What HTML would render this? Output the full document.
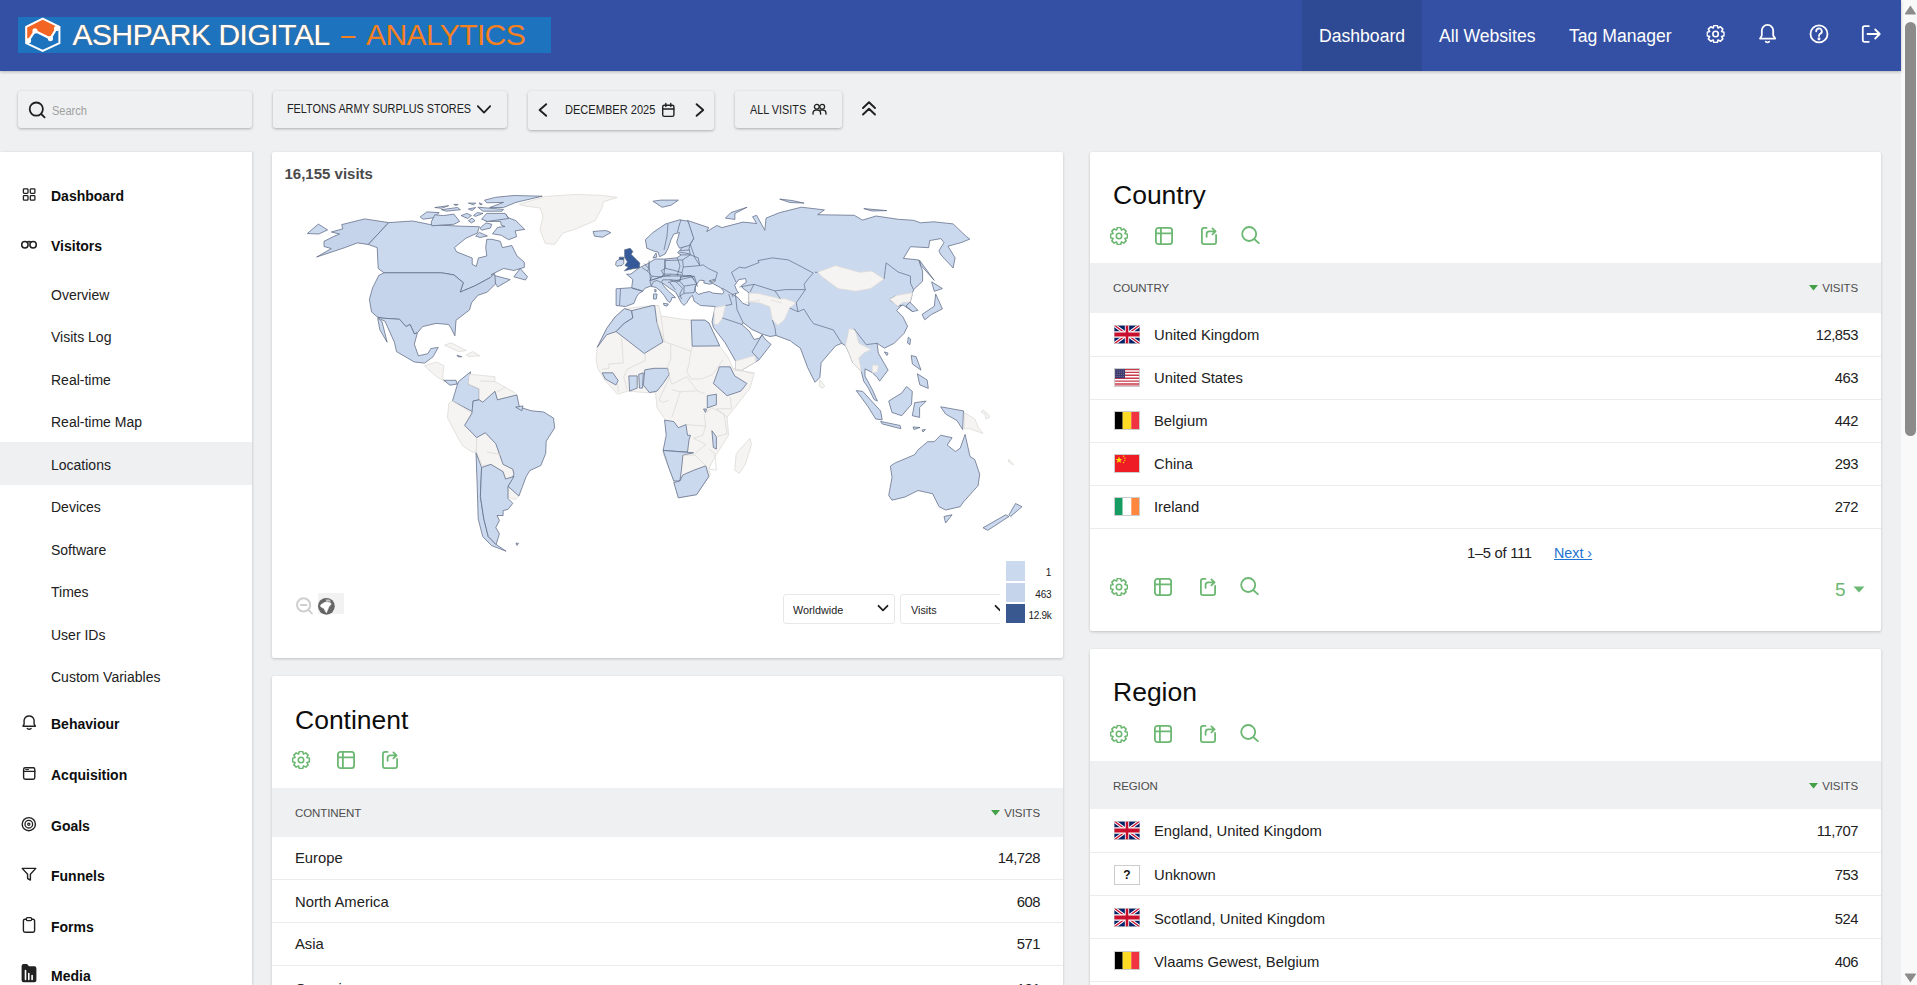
<!DOCTYPE html>
<html><head><meta charset="utf-8"><title>Locations - Matomo</title>
<style>
html,body{margin:0;padding:0;}
body{width:1917px;height:985px;overflow:hidden;position:relative;background:#eff0f1;font-family:"Liberation Sans",sans-serif;color:#212121;}
.t{position:absolute;line-height:1;white-space:nowrap;}
.abs{position:absolute;}
#hdr{position:absolute;left:0;top:0;width:1901px;height:71px;background:#3450a4;box-shadow:0 1px 3px rgba(0,0,0,.25);z-index:2;}
.nav{color:#fff;font-size:17.6px;top:27.6px;}
.ctl{position:absolute;background:#eff0f1;border-radius:3px;box-shadow:0 1px 3px rgba(0,0,0,.28);}
.ctlt{font-size:12px;color:#212121;}
#side{position:absolute;left:0;top:152px;width:252px;height:833px;background:#fff;box-shadow:1px 0 2px rgba(0,0,0,.12);}
.s1{font-size:14px;font-weight:700;left:51px;color:#0d0d0d;}
.s2{font-size:14px;left:51px;color:#212121;}
.card{position:absolute;background:#fff;border-radius:2px;box-shadow:0 1px 3px rgba(0,0,0,.2);overflow:hidden;}
.ttl{font-size:26.5px;color:#0d0d0d;}
.thd{position:absolute;background:#eff0f1;}
.tht{font-size:11.5px;color:#4d4d4d;letter-spacing:-0.1px;}
.row{position:absolute;height:1px;background:#ececec;}
.cell{font-size:14.8px;color:#212121;}
.num{font-size:14.8px;color:#212121;letter-spacing:-0.5px;}
.ico{position:absolute;}
</style></head><body>
<svg width="0" height="0" style="position:absolute">
<defs>
<symbol id="gear" viewBox="0 0 18 18"><path d="M14.91,6.55 L17.44,7.36 L17.44,10.64 L14.91,11.45 L16.13,13.81 L13.81,16.13 L11.45,14.91 L10.64,17.44 L7.36,17.44 L6.55,14.91 L4.19,16.13 L1.87,13.81 L3.09,11.45 L0.56,10.64 L0.56,7.36 L3.09,6.55 L1.87,4.19 L4.19,1.87 L6.55,3.09 L7.36,0.56 L10.64,0.56 L11.45,3.09 L13.81,1.87 L16.13,4.19 Z" fill="none" stroke="currentColor" stroke-width="1.6" stroke-linejoin="round"/><circle cx="9" cy="9" r="2.7" fill="none" stroke="currentColor" stroke-width="1.6"/></symbol>
<symbol id="tbl" viewBox="0 0 18 18"><rect x="0.9" y="0.9" width="16.2" height="16.2" rx="2.6" fill="none" stroke="currentColor" stroke-width="1.8"/><path d="M0.9 6.4H17.1M5.9 0.9V17.1" stroke="currentColor" stroke-width="1.8"/></symbol>
<symbol id="exp" viewBox="0 0 16 18"><path d="M5.5 0.9H3A2.1 2.1 0 0 0 0.9 3V15A2.1 2.1 0 0 0 3 17.1H13A2.1 2.1 0 0 0 15.1 15V8" fill="none" stroke="currentColor" stroke-width="1.8" stroke-linecap="round"/><path d="M5.6 9.8V7A2.6 2.6 0 0 1 8.2 4.4H14.4M11.4 1.4L14.6 4.4L11.4 7.4" fill="none" stroke="currentColor" stroke-width="1.8" stroke-linecap="round" stroke-linejoin="round"/></symbol>
<symbol id="srch" viewBox="0 0 19 18"><circle cx="8.2" cy="8" r="7" fill="none" stroke="currentColor" stroke-width="1.8"/><path d="M13.2 13L17.8 17.2" stroke="currentColor" stroke-width="1.8" stroke-linecap="round"/></symbol>
</defs></svg>

<!-- HEADER -->
<div id="hdr">
  <div class="abs" style="left:18px;top:17px;width:533px;height:36px;background:#1e73be;"></div>
  <svg class="abs" style="left:0;top:0" width="80" height="71" viewBox="0 0 80 71">
    <clipPath id="hx"><path d="M42.7,18 L60.2,26.4 L60.2,43.5 L42.7,51.6 L25.4,43.5 L25.4,26.4Z"/></clipPath>
    <g clip-path="url(#hx)"><rect x="20" y="15" width="45" height="40" fill="#1e73be"/>
    <path d="M20,15 H65 V28.5 L56.5,28.5 L50.4,38.6 L35,30.9 L28.5,40.7 L20,45Z" fill="#f26522"/></g>
    <path d="M42.7,18.6 L59.4,26.8 L59.4,43.1 L42.7,50.9 L26.2,43.1 L26.2,26.8Z" fill="none" stroke="#fff" stroke-width="2"/>
    <path d="M28.5,40.7 L35,30.9 L50.4,38.6 L56.5,28.5" fill="none" stroke="#fff" stroke-width="2.2"/>
    <circle cx="28.5" cy="40.7" r="2.6" fill="#fff"/><circle cx="35" cy="30.9" r="2.6" fill="#fff"/><circle cx="50.4" cy="38.6" r="2.6" fill="#fff"/><circle cx="56.5" cy="28.5" r="2.6" fill="#fff"/>
  </svg>
  <div class="t" style="left:72.5px;top:20px;font-size:30px;color:#fff;letter-spacing:-0.45px;text-shadow:0 0 1px #f47f20;">ASHPARK DIGITAL</div>
  <div class="t" style="left:341px;top:20px;font-size:30px;color:#f7801e;transform:scaleX(0.85);transform-origin:0 0;">–</div>
  <div class="t" style="left:366px;top:20px;font-size:30px;color:#f7801e;letter-spacing:-0.6px;">ANALYTICS</div>
  <svg class="abs" style="left:1700px;top:20px" width="190" height="30" viewBox="1700 20 190 30" fill="none" stroke="#fff" stroke-width="1.8" stroke-linecap="round" stroke-linejoin="round">
    <use href="#gear" x="1706.5" y="24.9" width="18.2" height="18.2" style="color:#fff"/>
    <path d="M1760,38.6 H1775.2 L1773.2,35.6 V30.6 A5.6,5.6 0 0 0 1761.8,30.6 V35.6 Z"/>
    <path d="M1765.8,41.6 Q1767.5,43.2 1769.2,41.6"/>
    <circle cx="1819" cy="33.9" r="8.5"/>
    <path d="M1816.2,31.3 A2.8,2.8 0 1 1 1820.2,33.8 Q1819,34.5 1819,36"/>
    <circle cx="1819" cy="38.7" r="0.6" fill="#fff"/>
    <path d="M1868.8,26.2 H1864.6 A1.8,1.8 0 0 0 1862.8,28 V40 A1.8,1.8 0 0 0 1864.6,41.8 H1868.8"/>
    <path d="M1867.5,34 H1879.5 M1875.2,29.5 L1879.7,34 L1875.2,38.5"/>
  </svg>
  <div class="abs" style="left:1302px;top:0;width:120px;height:71px;background:#2f4a94;"></div>
  <div class="t nav" style="left:1319px;">Dashboard</div>
  <div class="t nav" style="left:1439px;">All Websites</div>
  <div class="t nav" style="left:1569px;">Tag Manager</div>
</div>

<!-- SCROLLBAR -->
<div class="abs" style="left:1901px;top:0;width:16px;height:985px;background:#f9f9f9;"></div>
<div class="abs" style="left:1905px;top:22px;width:11px;height:414px;border-radius:6px;background:#8b8b8b;"></div>
<svg class="abs" style="left:1901px;top:0" width="16" height="985" viewBox="1901 0 16 985"><path d="M1910.4,5.6 L1915.8,13.6 Q1916.2,14.4 1915.3,14.4 H1905.5 Q1904.6,14.4 1905,13.6 Z" fill="#8b8b8b"/><path d="M1910.4,982.4 L1915.8,974.4 Q1916.2,973.6 1915.3,973.6 H1905.5 Q1904.6,973.6 1905,974.4 Z" fill="#8b8b8b"/></svg>

<!-- CONTROLS -->
<div class="ctl" style="left:18px;top:91px;width:234px;height:37px;"></div>
<svg class="abs" style="left:28px;top:101px" width="19" height="18" viewBox="0 0 19 18" fill="none" stroke="#212121" stroke-width="1.8" stroke-linecap="round"><circle cx="8.3" cy="8.1" r="6.6"/><path d="M13.2 13L16.6 16.4"/></svg>
<div class="t" style="left:51.5px;top:104.5px;font-size:12.5px;color:#a0a0a0;transform:scaleX(0.88);transform-origin:0 0;">Search</div>
<div class="ctl" style="left:273px;top:91px;width:234px;height:37px;"></div>
<div class="t ctlt" style="left:287.4px;top:103px;font-size:12.5px;transform:scaleX(0.867);transform-origin:0 0;">FELTONS ARMY SURPLUS STORES</div>
<svg class="abs" style="left:476px;top:104px" width="16" height="11" viewBox="0 0 16 11" fill="none" stroke="#212121" stroke-width="1.8" stroke-linecap="round" stroke-linejoin="round"><path d="M1.8 2.2L8 8.6L14.2 2.2"/></svg>
<div class="ctl" style="left:528px;top:91px;width:186px;height:39px;"></div>
<svg class="abs" style="left:536px;top:102px" width="14" height="16" viewBox="0 0 14 16" fill="none" stroke="#212121" stroke-width="1.9" stroke-linecap="round" stroke-linejoin="round"><path d="M10.2 2.2L3.6 8L10.2 13.8"/></svg>
<div class="t ctlt" style="left:565px;top:104.3px;font-size:12.5px;transform:scaleX(0.885);transform-origin:0 0;">DECEMBER 2025</div>
<svg class="abs" style="left:661px;top:102px" width="15" height="16" viewBox="0 0 15 16" fill="none" stroke="#212121" stroke-width="1.4" stroke-linecap="round"><rect x="1.7" y="3.2" width="11.2" height="11.2" rx="1.6"/><path d="M1.7 7H12.9M4.8 1.5V4.5M9.8 1.5V4.5"/></svg>
<svg class="abs" style="left:693px;top:102px" width="14" height="16" viewBox="0 0 14 16" fill="none" stroke="#212121" stroke-width="1.9" stroke-linecap="round" stroke-linejoin="round"><path d="M3.6 2.2L10.2 8L3.6 13.8"/></svg>
<div class="ctl" style="left:735px;top:91px;width:107px;height:37px;"></div>
<div class="t ctlt" style="left:750px;top:103.5px;font-size:12.5px;transform:scaleX(0.865);transform-origin:0 0;">ALL VISITS</div>
<svg class="abs" style="left:812px;top:103px" width="15" height="13" viewBox="0 0 15 13" fill="none" stroke="#212121" stroke-width="1.3" stroke-linecap="round"><circle cx="4.8" cy="3.8" r="2.4"/><circle cx="10.2" cy="3.8" r="2.4"/><path d="M1 11.2V10A3 3 0 0 1 4 7.2H5.6A3 3 0 0 1 8.6 10V11.2M7.5 7.2H11A3 3 0 0 1 14 10V11.2"/></svg>
<svg class="abs" style="left:860px;top:99px" width="18" height="18" viewBox="0 0 18 18" fill="none" stroke="#212121" stroke-width="1.9" stroke-linecap="round" stroke-linejoin="round"><path d="M3 9L9 3.2L15 9M3 15.5L9 9.7L15 15.5"/></svg>

<!-- SIDEBAR -->
<div id="side">
  <div class="abs" style="left:0;top:290px;width:252px;height:43px;background:#eff0f1;"></div>
</div>
<div class="t s1" style="top:188.7px;">Dashboard</div>
<div class="t s1" style="top:239.2px;">Visitors</div>
<div class="t s2" style="top:287.5px;">Overview</div>
<div class="t s2" style="top:330px;">Visits Log</div>
<div class="t s2" style="top:372.5px;">Real-time</div>
<div class="t s2" style="top:415px;">Real-time Map</div>
<div class="t s2" style="top:457.5px;">Locations</div>
<div class="t s2" style="top:500px;">Devices</div>
<div class="t s2" style="top:542.5px;">Software</div>
<div class="t s2" style="top:585px;">Times</div>
<div class="t s2" style="top:627.5px;">User IDs</div>
<div class="t s2" style="top:670px;">Custom Variables</div>
<div class="t s1" style="top:717px;">Behaviour</div>
<div class="t s1" style="top:768.3px;">Acquisition</div>
<div class="t s1" style="top:819px;">Goals</div>
<div class="t s1" style="top:869px;">Funnels</div>
<div class="t s1" style="top:919.6px;">Forms</div>
<div class="t s1" style="top:969.4px;">Media</div>

<svg class="abs" style="left:16px;top:180px" width="26" height="810" viewBox="16 180 26 810" fill="none" stroke="#212121" stroke-width="1.3" stroke-linecap="round" stroke-linejoin="round">
  <rect x="23.4" y="188.8" width="4.6" height="4.6" rx="0.8"/><rect x="30.3" y="188.8" width="4.6" height="4.6" rx="0.8"/>
  <rect x="23.4" y="195.6" width="4.6" height="4.6" rx="0.8"/><rect x="30.3" y="195.6" width="4.6" height="4.6" rx="0.8"/>
  <circle cx="24.9" cy="244.7" r="3.2" stroke-width="1.5"/><circle cx="33.1" cy="244.7" r="3.2" stroke-width="1.5"/><path d="M27.2,242.4 Q29,240.6 30.8,242.4" stroke-width="1.5"/>
  <path d="M23,726.2 H35.4 L34.1,724.2 V720.2 A5.1,5.3 0 0 0 24.1,720.2 V724.2 Z" stroke-width="1.4"/><path d="M27.3,728.5 Q29.2,730 31.1,728.5" stroke-width="1.4"/>
  <rect x="23.6" y="767.8" width="11.2" height="11.4" rx="1.6" stroke-width="1.4"/><path d="M23.6,771.4 H34.8" stroke-width="1.4"/><path d="M25.6,769.6 H28.6" stroke-width="1" />
  <circle cx="28.8" cy="824.2" r="6.6" stroke-width="1.4"/><circle cx="28.8" cy="824.2" r="3.8" stroke-width="1.3"/><circle cx="28.8" cy="824.2" r="1.1" stroke-width="1.2"/>
  <path d="M22.2,868.4 H35.8 L30.4,874.3 V880 L27.6,878.6 V874.3 Z" stroke-width="1.4"/>
  <path d="M26.2,919.2 H25 A1.6,1.6 0 0 0 23.4,920.8 V930.6 A1.6,1.6 0 0 0 25,932.2 H33 A1.6,1.6 0 0 0 34.6,930.6 V920.8 A1.6,1.6 0 0 0 33,919.2 H31.8" stroke-width="1.4"/><rect x="26.4" y="917.6" width="5.2" height="3" rx="1" stroke-width="1.3"/>
  <path d="M21.6,966 A2,2 0 0 1 23.6,964 H27 L29,966.2 H34.4 A2,2 0 0 1 36.4,968.2 V980.3 A2,2 0 0 1 34.4,982.3 H23.6 A2,2 0 0 1 21.6,980.3 Z" fill="#212121" stroke="none"/>
  <path d="M25.5,979.5 V970.5 M28.8,979.5 V973.5 M32.1,979.5 V975.5" stroke="#fff" stroke-width="1.6"/>
</svg>
<!-- MAP CARD -->
<div class="card" style="left:272px;top:152px;width:791px;height:506px;">
  <div class="t" style="left:12.5px;top:14.3px;font-size:15px;font-weight:700;color:#4a4a4a;">16,155 visits</div>
  <svg class="ico" style="left:22px;top:444px" width="24" height="24" viewBox="0 0 24 24" fill="none" stroke="#cfcfcf" stroke-width="2" stroke-linecap="round"><circle cx="9.6" cy="8.9" r="6.6"/><path d="M6.8 8.9H12.4M14.4 13.8L17.8 17.4"/></svg>
  <div class="ico" style="left:46px;top:441px;width:26px;height:21px;background:#f2f2f2;"></div>
  <svg class="ico" style="left:45px;top:445px" width="18" height="18" viewBox="0 0 18 18"><circle cx="9.4" cy="9.3" r="8.4" fill="#666"/><path d="M8.6,2.6 L12.4,2.4 L14.2,4.6 L9.4,4.4Z" fill="#c8c8c8"/><path d="M3.4,9.1 L4.8,10.5 L6.8,11.2 L8,13.4 L9.4,15.8 L10.4,13.4 L11.4,11 L12.1,9.3 L13.7,7.9 L14,6.4 L12.6,5.6 L10.1,5 L8,5.3 L5.8,6.4 L3.9,7.8Z" fill="#fff" stroke="#fff" stroke-width="0.6" stroke-linejoin="round"/></svg>
  <div class="ico" style="left:510.5px;top:442.4px;width:110px;height:28px;border:1px solid #e8e8e8;border-radius:3px;background:#fff;"></div>
  <div class="t" style="left:520.7px;top:452px;font-size:11.6px;color:#212121;transform:scaleX(0.93);transform-origin:0 0;">Worldwide</div>
  <svg class="ico" style="left:605px;top:452px" width="12" height="9" viewBox="0 0 12 9" fill="none" stroke="#212121" stroke-width="1.8" stroke-linecap="round" stroke-linejoin="round"><path d="M1.5 1.8L6 6.4L10.5 1.8"/></svg>
  <div class="ico" style="left:628.4px;top:442.4px;width:110px;height:28px;border:1px solid #e8e8e8;border-radius:3px;background:#fff;"></div>
  <div class="t" style="left:639px;top:452px;font-size:11.6px;color:#212121;transform:scaleX(0.93);transform-origin:0 0;">Visits</div>
  <svg class="ico" style="left:722px;top:452px" width="12" height="9" viewBox="0 0 12 9" fill="none" stroke="#212121" stroke-width="1.8" stroke-linecap="round" stroke-linejoin="round"><path d="M1.5 1.8L6 6.4L10.5 1.8"/></svg>
  <div class="ico" style="left:728.4px;top:405px;width:62px;height:70px;background:#fff;"></div>
  <div class="ico" style="left:734px;top:409px;width:19px;height:20px;background:#cbd9ef;"></div>
  <div class="ico" style="left:734px;top:431px;width:19px;height:19px;background:#c5d4ea;"></div>
  <div class="ico" style="left:734px;top:452px;width:19px;height:19px;background:#38588f;"></div>
  <div class="t" style="right:11.6px;top:416px;font-size:10px;color:#212121;">1</div>
  <div class="t" style="right:11.6px;top:437.6px;font-size:10px;color:#212121;letter-spacing:-0.2px;">463</div>
  <div class="t" style="right:11.6px;top:458.7px;font-size:10px;color:#212121;letter-spacing:-0.3px;">12.9k</div>
  <!--MAP--><svg class="abs" style="left:0;top:0;" width="791" height="506" viewBox="272 152 791 506" stroke-linejoin="round"><path d="M341.7,224.6 L364.7,218.9 L388.7,222.6 L368.3,244.5 L357.4,242.9 L344.9,247.6 L316.7,257.0 L331.3,248.6 L324.0,246.5 L324.0,241.3 L334.4,236.1 L339.6,234.0 L331.3,232.0 L342.8,228.8Z" fill="#c5d4ea" stroke="#5f6b84" stroke-width="0.75"/><path d="M307.3,233.5 L318.3,224.1 L327.6,229.9 L318.8,234.0Z" fill="#cbd9ef" stroke="#5f6b84" stroke-width="0.75"/><path d="M388.7,222.6 L412.7,221.0 L430.4,224.6 L460.7,226.2 L479.4,226.7 L477.4,233.0 L465.9,238.2 L454.4,247.6 L456.5,251.8 L472.2,258.0 L472.2,264.3 L476.3,266.4 L478.4,258.0 L486.8,256.0 L485.7,247.6 L486.8,239.3 L492.0,239.3 L500.3,241.3 L502.4,247.6 L511.8,245.5 L517.0,256.0 L524.3,262.2 L524.3,267.4 L513.9,270.5 L503.5,268.5 L491.0,274.7 L510.2,279.6 L497.7,286.9 L495.6,283.8 L490.4,277.5 L474.8,285.9 L460.2,292.1 L463.3,282.7 L453.9,274.9 L441.4,272.8 L384.0,272.8 L378.2,268.5 L377.2,247.6 L368.3,244.5Z" fill="#cbd9ef" stroke="#5f6b84" stroke-width="0.75"/><path d="M486.0,221.4 L500.6,221.4 L501.3,225.1 L505.0,226.5 L497.7,227.3 L492.5,233.8 L501.3,235.3 L508.6,239.7 L516.6,236.7 L515.2,230.9 L524.7,229.4 L515.9,220.7 L508.6,217.8 L505.7,214.1 L497.7,216.3 L486.7,220.7Z" fill="#cbd9ef" stroke="#5f6b84" stroke-width="0.75"/><path d="M420.2,217.0 L426.8,211.9 L439.2,212.6 L433.4,217.8 L423.1,219.2Z" fill="#cbd9ef" stroke="#5f6b84" stroke-width="0.75"/><path d="M431.2,222.1 L434.8,214.8 L443.6,215.6 L453.8,214.1 L459.7,221.4 L453.8,224.3 L440.7,225.1 L431.9,225.8Z" fill="#cbd9ef" stroke="#5f6b84" stroke-width="0.75"/><path d="M434.8,207.5 L448.7,205.7 L441.4,208.3Z" fill="#cbd9ef" stroke="#5f6b84" stroke-width="0.75"/><path d="M441.4,209.7 L457.5,207.5 L460.4,209.7 L446.5,211.2Z" fill="#cbd9ef" stroke="#5f6b84" stroke-width="0.75"/><path d="M453.8,204.4 L458.2,204.4 L456.0,205.4Z" fill="#cbd9ef" stroke="#5f6b84" stroke-width="0.75"/><path d="M468.4,203.1 L475.7,203.1 L473.5,204.8Z" fill="#cbd9ef" stroke="#5f6b84" stroke-width="0.75"/><path d="M479.4,202.8 L482.3,204.2 L480.0,204.6Z" fill="#cbd9ef" stroke="#5f6b84" stroke-width="0.75"/><path d="M484.5,200.2 L495.5,197.3 L513.7,195.5 L542.2,196.2 L515.9,202.4 L503.5,207.5 L489.6,207.5 L503.5,202.4 L486.7,202.8Z" fill="#cbd9ef" stroke="#5f6b84" stroke-width="0.75"/><path d="M477.9,207.2 L503.5,209.4 L502.0,211.2 L483.0,211.2Z" fill="#cbd9ef" stroke="#5f6b84" stroke-width="0.75"/><path d="M468.4,209.0 L475.7,207.5 L472.1,210.5Z" fill="#cbd9ef" stroke="#5f6b84" stroke-width="0.75"/><path d="M461.1,215.6 L467.0,213.4 L471.4,215.6 L467.7,218.5Z" fill="#cbd9ef" stroke="#5f6b84" stroke-width="0.75"/><path d="M473.5,215.6 L477.2,212.6 L483.0,213.4 L475.7,216.3Z" fill="#cbd9ef" stroke="#5f6b84" stroke-width="0.75"/><path d="M468.4,220.7 L472.1,218.1 L475.0,220.7 L471.4,222.9Z" fill="#cbd9ef" stroke="#5f6b84" stroke-width="0.75"/><path d="M481.6,219.2 L486.7,213.4 L505.0,213.4 L508.6,218.5 L487.4,221.4Z" fill="#cbd9ef" stroke="#5f6b84" stroke-width="0.75"/><path d="M475.7,236.0 L479.4,232.4 L487.4,236.0 L480.1,237.5Z" fill="#cbd9ef" stroke="#5f6b84" stroke-width="0.75"/><path d="M480.1,228.0 L486.0,222.9 L491.8,224.3 L490.4,228.0 L481.6,230.2Z" fill="#cbd9ef" stroke="#5f6b84" stroke-width="0.75"/><path d="M513.9,276.8 L520.2,268.5 L527.5,276.8 L525.4,280.0Z" fill="#cbd9ef" stroke="#5f6b84" stroke-width="0.75"/><path d="M384.0,272.8 L441.4,272.8 L453.9,274.9 L463.3,282.7 L460.2,292.1 L474.8,285.9 L490.4,277.5 L494.6,273.3 L495.6,283.8 L487.3,292.1 L477.9,295.3 L471.6,302.6 L469.5,309.9 L456.0,320.3 L454.9,335.9 L450.8,327.6 L448.7,324.5 L436.2,323.4 L422.6,326.6 L417.4,332.8 L414.3,333.9 L410.1,324.5 L405.9,326.6 L399.6,319.3 L383.0,318.2 L377.7,317.2 L371.5,311.9 L369.4,299.4 L372.5,288.0 L378.8,275.4Z" fill="#c5d4ea" stroke="#5f6b84" stroke-width="0.75"/><path d="M377.7,317.2 L383.0,318.2 L399.6,319.3 L405.9,326.6 L410.1,324.5 L414.3,333.9 L417.4,332.8 L414.3,344.3 L418.4,355.8 L427.8,353.7 L430.9,348.5 L438.2,347.4 L433.0,356.8 L424.7,363.1 L414.3,362.0 L396.5,351.6 L394.4,342.2 L385.0,321.3 L380.9,319.3Z" fill="#cbd9ef" stroke="#5f6b84" stroke-width="0.75"/><path d="M377.7,318.2 L379.8,329.7 L387.1,342.2 L386.1,338.0 L381.9,321.3Z" fill="#cbd9ef" stroke="#5f6b84" stroke-width="0.75"/><path d="M519.1,204.3 L545.2,196.5 L576.5,194.4 L602.6,195.4 L617.2,197.5 L603.6,201.7 L601.5,209.0 L597.4,216.3 L595.3,220.5 L576.5,228.8 L562.9,233.0 L554.6,244.5 L545.2,243.4 L542.1,235.1 L540.0,229.9 L543.1,216.3 L540.0,208.0 L524.3,205.9Z" fill="#f5f4f2" stroke="#dcdad6" stroke-width="0.75"/><path d="M444.5,345.3 L450.8,342.7 L466.4,350.5 L459.1,351.6Z" fill="#f5f4f2" stroke="#dcdad6" stroke-width="0.75"/><path d="M466.4,354.7 L472.7,351.6 L480.0,355.8 L468.0,356.5Z" fill="#f5f4f2" stroke="#dcdad6" stroke-width="0.75"/><path d="M424.4,365.7 L436.5,362.0 L443.8,365.7 L442.6,377.9 L445.0,381.5 L436.5,376.7 L426.8,368.1Z" fill="#f5f4f2" stroke="#dcdad6" stroke-width="0.75"/><path d="M457.0,355.2 L461.7,356.8 L458.0,356.8Z" fill="#cbd9ef" stroke="#5f6b84" stroke-width="0.75"/><path d="M443.8,380.3 L456.0,380.3 L457.2,384.0 L450.0,385.2Z" fill="#cbd9ef" stroke="#5f6b84" stroke-width="0.75"/><path d="M458.5,381.5 L470.6,371.8 L468.2,384.0 L479.2,388.8 L479.2,399.8 L473.1,401.0 L473.1,412.0 L452.4,401.0 L457.2,385.2Z" fill="#cbd9ef" stroke="#5f6b84" stroke-width="0.75"/><path d="M469.4,374.2 L495.0,376.7 L495.0,381.5 L514.5,392.5 L516.9,395.0 L497.4,399.8 L495.0,391.3 L482.8,402.2 L479.2,399.8 L479.2,388.8 L468.2,384.0Z" fill="#f5f4f2" stroke="#dcdad6" stroke-width="0.75"/><path d="M452.4,401.0 L471.9,413.2 L464.6,425.4 L473.1,433.9 L476.7,437.6 L476.3,452.2 L472.6,452.2 L462.9,446.1 L459.2,440.0 L447.5,418.1 L448.7,403.5Z" fill="#f5f4f2" stroke="#dcdad6" stroke-width="0.75"/><path d="M476.7,437.6 L485.3,432.7 L495.8,443.7 L503.1,464.4 L512.8,469.2 L514.0,476.5 L505.5,479.0 L503.1,471.7 L490.9,464.4 L482.4,465.6 L476.3,452.2Z" fill="#f5f4f2" stroke="#dcdad6" stroke-width="0.75"/><path d="M508.0,486.3 L518.9,496.0 L515.3,499.7 L508.0,497.2Z" fill="#f5f4f2" stroke="#dcdad6" stroke-width="0.75"/><path d="M473.1,401.0 L479.2,399.8 L482.8,402.2 L495.0,391.3 L497.4,399.8 L516.9,395.0 L519.4,407.1 L531.5,410.8 L543.7,412.0 L553.5,418.1 L554.7,427.8 L546.2,441.2 L545.7,453.4 L540.8,465.6 L529.9,470.5 L526.2,476.5 L518.9,496.0 L508.0,486.3 L514.0,474.1 L512.8,469.2 L503.1,464.4 L495.8,443.7 L485.3,432.7 L476.7,437.6 L473.1,433.9 L464.6,425.4 L471.9,413.2Z" fill="#cbd9ef" stroke="#5f6b84" stroke-width="0.75"/><path d="M515.7,407.1 L523.0,405.9 L521.8,410.8Z" fill="#cbd9ef" stroke="#5f6b84" stroke-width="0.75"/><path d="M476.0,452.8 L481.6,467.4 L480.4,496.4 L483.8,518.8 L488.3,536.6 L496.1,544.5 L506.1,551.2 L491.6,545.6 L482.7,536.6 L478.2,518.8 L477.1,483.0Z" fill="#cbd9ef" stroke="#5f6b84" stroke-width="0.75"/><path d="M481.6,467.4 L490.9,464.4 L503.1,471.7 L505.5,479.0 L514.0,476.5 L508.0,486.3 L508.0,498.5 L512.8,503.3 L508.0,509.4 L503.1,510.6 L503.1,515.5 L497.0,515.5 L499.4,520.4 L495.8,527.7 L499.4,533.8 L496.1,544.5 L488.3,536.6 L483.8,518.8 L480.4,496.4Z" fill="#cbd9ef" stroke="#5f6b84" stroke-width="0.75"/><path d="M516.0,543.0 L518.5,543.5 L517.0,545.5Z" fill="#cbd9ef" stroke="#5f6b84" stroke-width="0.75"/><path d="M593.0,231.6 L599.4,230.9 L606.2,230.6 L610.8,232.6 L602.6,237.2 L594.6,236.2Z" fill="#cbd9ef" stroke="#5f6b84" stroke-width="0.75"/><path d="M652.9,201.2 L661.0,200.1 L678.3,200.1 L671.2,205.2 L662.1,207.3 L656.0,203.2Z" fill="#cbd9ef" stroke="#5f6b84" stroke-width="0.75"/><path d="M730.9,212.6 L747.1,207.2 L734.9,213.5 L734.9,219.4 L725.4,218.1Z" fill="#cbd9ef" stroke="#5f6b84" stroke-width="0.75"/><path d="M779.7,199.1 L792.0,200.5 L804.1,203.1 L790.0,202.5Z" fill="#cbd9ef" stroke="#5f6b84" stroke-width="0.75"/><path d="M863.8,208.6 L875.0,209.6 L886.8,210.6 L872.0,211.0Z" fill="#cbd9ef" stroke="#5f6b84" stroke-width="0.75"/><path d="M630.6,274.2 L638.7,268.1 L648.9,263.1 L655.0,259.0 L665.1,259.0 L676.9,257.8 L681.2,254.9 L677.6,252.8 L682.6,247.1 L690.4,244.3 L693.5,238.7 L687.4,220.4 L708.7,227.6 L706.7,231.6 L716.9,225.5 L721.9,227.6 L743.1,222.1 L756.6,223.5 L752.6,216.7 L756.6,215.3 L764.8,230.3 L766.1,218.1 L779.7,212.6 L801.4,207.2 L824.4,209.9 L817.7,214.7 L854.3,215.3 L862.4,220.1 L876.0,216.0 L898.3,219.3 L913.5,220.3 L920.6,222.8 L933.8,221.8 L953.1,223.9 L966.3,236.5 L969.8,239.1 L961.2,242.6 L948.0,246.2 L955.1,257.9 L953.1,268.0 L940.9,254.8 L938.9,250.8 L944.0,242.6 L940.9,238.6 L929.7,240.6 L928.7,247.7 L910.5,246.7 L903.4,258.4 L918.6,259.9 L922.6,271.1 L922.6,281.2 L913.5,289.8 L912.6,292.7 L909.9,303.5 L912.6,311.6 L903.1,305.0 L897.7,306.2 L889.5,299.4 L895.4,295.8 L890.5,300.7 L901.5,305.6 L896.6,310.5 L902.7,316.5 L907.6,326.3 L903.9,333.6 L894.2,343.3 L884.4,348.2 L877.1,343.3 L878.3,353.1 L888.1,370.1 L879.6,381.1 L877.1,377.4 L872.3,372.6 L865.0,368.9 L865.0,376.2 L872.3,389.6 L877.4,401.1 L874.1,399.5 L868.4,388.1 L863.7,381.1 L861.3,371.4 L852.8,362.8 L847.9,350.6 L845.5,345.8 L841.8,343.3 L835.7,345.8 L821.1,362.8 L819.9,377.4 L815.0,382.3 L807.7,367.7 L800.4,348.2 L791.9,342.1 L790.6,340.9 L776.0,335.5 L770.0,336.5 L761.8,334.0 L752.0,329.5 L743.0,322.5 L742.0,324.5 L749.5,331.5 L754.0,339.5 L760.0,338.0 L762.0,334.8 L765.0,339.0 L771.0,344.4 L759.2,359.6 L755.9,361.8 L741.3,370.2 L735.5,370.2 L735.5,361.0 L725.1,342.7 L713.5,327.5 L712.0,322.0 L714.2,311.7 L715.2,307.6 L715.2,306.5 L700.6,305.5 L694.0,301.1 L692.5,295.4 L690.4,296.9 L686.9,302.5 L684.0,305.4 L681.2,302.5 L678.3,296.9 L675.5,291.9 L669.8,288.3 L664.1,284.1 L662.0,282.8 L663.4,285.5 L668.4,291.2 L674.1,296.1 L675.5,297.6 L671.9,297.6 L671.2,300.4 L669.8,302.5 L667.7,301.1 L664.1,295.4 L659.9,290.5 L656.3,287.6 L653.5,286.9 L650.6,286.2 L644.9,288.3 L642.8,291.2 L639.2,293.3 L636.9,296.1 L633.8,303.4 L625.5,306.5 L616.1,305.5 L616.1,288.8 L631.7,287.7 L632.8,279.4 L626.5,274.2Z M695.3,286.2 L698.1,282.2 L699.7,280.2 L704.2,280.6 L703.8,283.0 L709.5,284.2 L712.7,283.4 L720.9,287.9 L724.1,291.9 L722.5,294.0 L712.7,293.1 L709.5,291.5 L703.8,292.7 L698.1,294.4 L695.3,291.1Z M734.7,285.4 L738.7,279.7 L745.6,278.5 L746.4,282.2 L741.6,285.4 L742.8,288.3 L746.8,291.1 L749.0,293.0 L748.9,300.0 L748.9,305.7 L742.8,303.3 L737.9,297.6 L732.6,294.4 L738.7,292.7 L736.7,290.3Z M709.1,281.0 L714.4,279.3 L715.6,281.0 L711.9,282.6Z" fill="#cbd9ef" fill-rule="evenodd" stroke="#5f6b84" stroke-width="0.75"/><path d="M645.4,239.7 L652.9,232.6 L665.3,224.1 L679.5,219.8 L688.0,221.2 L693.7,238.3 L689.4,245.4 L679.5,248.2 L676.6,242.5 L679.5,232.6 L673.8,234.0 L671.0,239.7 L668.1,248.2 L665.1,254.0 L659.6,256.7 L658.0,252.0 L653.9,251.1 L646.8,248.2Z" fill="#cbd9ef" stroke="#5f6b84" stroke-width="0.75"/><path d="M652.9,258.0 L656.0,252.9 L657.0,257.0Z" fill="#cbd9ef" stroke="#5f6b84" stroke-width="0.75"/><path d="M653.5,294.0 L657.0,294.0 L656.3,299.0 L653.5,299.0Z" fill="#cbd9ef" stroke="#5f6b84" stroke-width="0.75"/><path d="M654.6,289.5 L656.2,289.8 L655.9,292.0 L654.8,291.8Z" fill="#cbd9ef" stroke="#5f6b84" stroke-width="0.75"/><path d="M663.4,303.3 L668.4,304.0 L667.0,306.1 L664.1,305.4Z" fill="#cbd9ef" stroke="#5f6b84" stroke-width="0.75"/><path d="M616.2,261.4 L619.3,259.3 L623.8,259.6 L623.8,263.3 L622.0,265.4 L616.8,266.3 L615.6,264.8Z" fill="#cbd9ef" stroke="#5f6b84" stroke-width="0.75"/><path d="M624.6,249.8 L630.2,248.3 L632.8,251.4 L631.2,254.4 L636.2,259.4 L639.8,263.0 L639.3,267.9 L633.2,268.7 L624.4,270.8 L628.3,267.0 L624.9,265.6 L627.4,261.8 L624.7,257.5Z" fill="#355a9a" stroke="#5f6b84" stroke-width="0.7"/><path d="M619.3,257.2 L623.8,257.2 L623.8,259.6 L619.3,259.3Z" fill="#355a9a" stroke="#5f6b84" stroke-width="0.75"/><path d="M597.3,347.2 L606.7,328.4 L615.0,317.0 L624.4,308.6 L652.6,305.5 L658.9,305.5 L661.0,315.9 L680.8,319.0 L691.2,320.1 L704.8,320.1 L709.0,323.0 L719.7,345.9 L728.3,357.6 L733.5,369.8 L754.5,372.8 L750.0,388.1 L734.7,407.9 L727.1,417.0 L728.6,435.3 L714.9,456.6 L708.8,468.8 L710.3,474.9 L696.6,494.7 L678.3,497.8 L673.8,481.0 L669.2,468.8 L663.1,453.6 L667.7,435.3 L664.6,418.5 L657.0,407.9 L655.5,392.6 L644.8,392.6 L628.1,391.1 L617.4,394.2 L605.2,380.5 L597.6,368.3 L596.1,359.1Z" fill="#f5f4f2" stroke="#dcdad6" stroke-width="0.75"/><path d="M624.4,308.6 L631.7,310.7 L632.8,318.0 L624.4,323.2 L616.1,331.6 L606.7,334.7 L597.3,347.2 L606.7,328.4 L615.0,317.0Z" fill="#cbd9ef" stroke="#5f6b84" stroke-width="0.75"/><path d="M631.7,310.7 L652.6,305.5 L654.7,305.5 L656.8,322.2 L663.0,342.0 L644.3,353.5 L616.1,331.6 L624.4,323.2 L632.8,318.0Z" fill="#cbd9ef" stroke="#5f6b84" stroke-width="0.75"/><path d="M691.2,320.1 L704.8,320.1 L709.0,323.0 L719.7,345.9 L692.2,346.2Z" fill="#cbd9ef" stroke="#5f6b84" stroke-width="0.75"/><path d="M602.2,372.8 L612.8,372.8 L618.2,380.5 L615.9,385.0 L605.2,378.9Z" fill="#cbd9ef" stroke="#5f6b84" stroke-width="0.75"/><path d="M628.8,375.9 L637.2,375.9 L637.2,388.1 L629.6,391.1Z" fill="#cbd9ef" stroke="#5f6b84" stroke-width="0.75"/><path d="M638.7,374.4 L643.3,372.8 L642.6,388.1 L639.5,388.1Z" fill="#cbd9ef" stroke="#5f6b84" stroke-width="0.75"/><path d="M644.8,369.8 L654.0,368.3 L667.7,368.3 L669.2,374.4 L663.1,383.5 L657.0,391.1 L649.4,392.6 L643.3,385.0Z" fill="#cbd9ef" stroke="#5f6b84" stroke-width="0.75"/><path d="M719.5,366.8 L730.1,366.8 L734.7,375.9 L746.9,383.5 L740.8,391.1 L727.1,395.7 L713.4,383.5Z" fill="#cbd9ef" stroke="#5f6b84" stroke-width="0.75"/><path d="M707.3,395.7 L716.4,394.2 L716.4,404.8 L707.3,407.9Z" fill="#cbd9ef" stroke="#5f6b84" stroke-width="0.75"/><path d="M703.5,409.0 L706.5,409.0 L705.5,412.5Z" fill="#cbd9ef" stroke="#5f6b84" stroke-width="0.75"/><path d="M711.9,430.7 L716.4,436.8 L716.4,449.0 L713.4,447.5Z" fill="#cbd9ef" stroke="#5f6b84" stroke-width="0.75"/><path d="M664.6,420.1 L673.8,421.6 L678.3,427.7 L686.0,424.6 L687.5,435.3 L690.5,435.3 L689.0,439.9 L687.5,452.1 L663.1,450.5 L666.2,435.3Z" fill="#cbd9ef" stroke="#5f6b84" stroke-width="0.75"/><path d="M663.1,450.5 L693.6,452.8 L682.9,455.1 L681.4,470.3 L679.9,481.0 L673.8,481.0 L669.2,468.8Z" fill="#cbd9ef" stroke="#5f6b84" stroke-width="0.75"/><path d="M679.9,481.0 L682.9,474.9 L693.6,470.3 L705.8,465.8 L708.8,476.4 L696.6,494.7 L678.3,497.8 L673.8,482.5Z" fill="#cbd9ef" stroke="#5f6b84" stroke-width="0.75"/><path d="M749.9,438.3 L751.5,444.4 L745.4,464.2 L739.3,473.4 L734.7,470.3 L736.2,453.6Z" fill="#f5f4f2" stroke="#dcdad6" stroke-width="0.75"/><path d="M817.7,272.3 L835.3,265.5 L859.7,272.3 L871.9,271.0 L884.1,279.1 L870.6,288.6 L855.6,291.3 L838.0,288.6 L821.7,276.4Z" fill="#f5f4f2" stroke="#dcdad6" stroke-width="0.75"/><path d="M749.0,293.0 L759.2,293.6 L780.3,298.8 L785.6,298.8 L796.2,302.8 L789.6,308.0 L784.3,320.0 L777.7,325.2 L772.4,320.0 L769.8,306.8 L759.2,302.8 L749.0,302.0Z" fill="#f5f4f2" stroke="#dcdad6" stroke-width="0.75"/><path d="M715.2,307.6 L725.6,305.5 L722.5,318.0 L718.3,324.3 L714.2,324.3 L714.2,311.7Z" fill="#f5f4f2" stroke="#dcdad6" stroke-width="0.75"/><path d="M735.5,361.0 L754.8,355.5 L755.9,361.8 L741.3,370.2 L735.5,370.2Z" fill="#f5f4f2" stroke="#dcdad6" stroke-width="0.75"/><path d="M845.5,345.8 L849.1,328.7 L855.2,329.9 L858.9,343.3 L871.0,349.4 L863.7,353.1 L858.9,358.0 L861.3,371.4 L852.8,362.8 L847.9,350.6Z" fill="#f5f4f2" stroke="#dcdad6" stroke-width="0.75"/><path d="M872.3,365.0 L878.3,365.3 L877.5,372.0 L872.3,372.6Z" fill="#f5f4f2" stroke="#dcdad6" stroke-width="0.75"/><path d="M889.5,299.4 L896.3,295.4 L912.6,292.7 L909.9,302.2 L903.1,302.2 L897.7,306.2Z" fill="#f5f4f2" stroke="#dcdad6" stroke-width="0.75"/><path d="M819.9,379.9 L824.8,386.0 L822.3,388.4 L819.0,386.0Z" fill="#f5f4f2" stroke="#dcdad6" stroke-width="0.75"/><path d="M909.9,302.2 L918.0,310.3 L912.6,311.6 L906.0,306.0Z" fill="#cbd9ef" stroke="#5f6b84" stroke-width="0.75"/><path d="M935.7,294.0 L942.4,308.9 L931.6,314.4 L924.8,319.8 L922.1,314.4 L934.3,306.2Z" fill="#cbd9ef" stroke="#5f6b84" stroke-width="0.75"/><path d="M931.6,281.8 L942.4,288.6 L934.3,291.3Z" fill="#cbd9ef" stroke="#5f6b84" stroke-width="0.75"/><path d="M919.4,260.1 L934.3,280.4 L921.0,265.5Z" fill="#cbd9ef" stroke="#5f6b84" stroke-width="0.75"/><path d="M908.3,337.2 L910.5,339.0 L910.0,344.6 L907.5,343.0Z" fill="#cbd9ef" stroke="#5f6b84" stroke-width="0.75"/><path d="M884.4,351.9 L888.1,353.1 L886.9,355.5Z" fill="#cbd9ef" stroke="#5f6b84" stroke-width="0.75"/><path d="M911.2,355.5 L916.1,356.7 L921.0,370.1 L912.4,364.0Z" fill="#cbd9ef" stroke="#5f6b84" stroke-width="0.75"/><path d="M917.3,373.8 L927.1,379.9 L928.3,388.4 L919.8,384.8Z" fill="#cbd9ef" stroke="#5f6b84" stroke-width="0.75"/><path d="M856.2,390.6 L862.7,391.4 L880.6,410.9 L882.2,419.8 L875.7,419.0 L867.6,406.0Z" fill="#cbd9ef" stroke="#5f6b84" stroke-width="0.75"/><path d="M880.6,421.4 L900.1,425.5 L900.9,428.7 L882.2,423.9Z" fill="#cbd9ef" stroke="#5f6b84" stroke-width="0.75"/><path d="M888.7,401.1 L901.7,393.0 L906.6,386.5 L912.3,391.4 L911.5,404.4 L901.7,415.7 L892.0,412.5Z" fill="#cbd9ef" stroke="#5f6b84" stroke-width="0.75"/><path d="M914.7,402.7 L926.1,401.1 L919.6,407.6 L919.6,417.4 L912.3,415.7Z" fill="#cbd9ef" stroke="#5f6b84" stroke-width="0.75"/><path d="M940.7,406.8 L963.5,410.9 L962.7,429.6 L957.0,420.6 L945.6,414.1Z" fill="#cbd9ef" stroke="#5f6b84" stroke-width="0.75"/><path d="M964.3,412.5 L974.8,419.0 L978.1,427.1 L983.0,433.6 L970.0,428.7 L964.3,428.7Z" fill="#f5f4f2" stroke="#dcdad6" stroke-width="0.75"/><path d="M913.0,427.0 L920.0,427.5 L914.0,429.5Z" fill="#cbd9ef" stroke="#5f6b84" stroke-width="0.75"/><path d="M922.0,430.0 L925.5,429.5 L923.0,432.0Z" fill="#cbd9ef" stroke="#5f6b84" stroke-width="0.75"/><path d="M890.4,466.1 L895.2,462.9 L914.7,454.7 L918.0,449.9 L927.7,441.7 L934.2,441.7 L940.7,435.2 L952.1,437.7 L947.2,445.0 L955.4,451.5 L960.2,448.2 L965.1,434.4 L970.0,456.4 L974.8,459.6 L979.7,474.2 L978.1,485.6 L963.5,501.9 L960.2,506.7 L945.6,510.0 L939.1,506.7 L932.6,493.7 L918.0,490.5 L905.0,497.0 L892.0,500.2 L888.7,495.4 L892.0,477.5Z" fill="#cbd9ef" stroke="#5f6b84" stroke-width="0.75"/><path d="M944.0,516.5 L952.1,514.8 L945.6,523.0Z" fill="#cbd9ef" stroke="#5f6b84" stroke-width="0.75"/><path d="M983.0,527.8 L1005.7,514.8 L1009.0,516.5 L987.8,530.3Z" fill="#cbd9ef" stroke="#5f6b84" stroke-width="0.75"/><path d="M1009.0,514.8 L1015.5,503.5 L1022.0,506.7 L1010.6,516.5Z" fill="#cbd9ef" stroke="#5f6b84" stroke-width="0.75"/><path d="M983.0,410.0 L987.0,413.0 L990.0,417.0 L986.0,419.0 L985.0,414.0 L981.0,412.0Z" fill="#f5f4f2" stroke="#dcdad6" stroke-width="0.75"/><path d="M1008.5,459.5 L1013.5,464.0 L1012.5,465.0 L1008.0,461.0Z" fill="#f5f4f2" stroke="#dcdad6" stroke-width="0.75"/><path d="M621.7,338.5 L623.3,363.0 L608.9,364.0 L608.9,368.3" fill="none" stroke="#d9d7d3" stroke-width="0.7"/><path d="M645.1,353.4 L645.1,360.8 L635.5,365.1 L627.0,369.4 L623.8,376.8" fill="none" stroke="#d9d7d3" stroke-width="0.7"/><path d="M664.3,341.7 L670.7,343.8 L691.0,351.2 L692.0,347.0" fill="none" stroke="#d9d7d3" stroke-width="0.7"/><path d="M670.7,343.8 L670.7,359.8 L667.5,366.2 L669.6,376.8 L671.8,384.3" fill="none" stroke="#d9d7d3" stroke-width="0.7"/><path d="M691.0,351.2 L688.8,365.1 L686.7,371.5 L691.0,379.0 L701.6,379.0 L712.3,374.7 L723.0,359.8" fill="none" stroke="#d9d7d3" stroke-width="0.7"/><path d="M671.8,384.3 L686.7,376.8 L697.3,390.7 L680.3,391.8 L671.8,389.6" fill="none" stroke="#d9d7d3" stroke-width="0.7"/><path d="M680.3,391.8 L678.2,398.2 L671.8,417.3" fill="none" stroke="#d9d7d3" stroke-width="0.7"/><path d="M697.3,390.7 L704.8,393.9" fill="none" stroke="#d9d7d3" stroke-width="0.7"/><path d="M669.6,376.8 L659.0,400.3 L663.2,402.4 L668.6,400.3" fill="none" stroke="#d9d7d3" stroke-width="0.7"/><path d="M730.4,397.1 L731.5,408.8 L716.5,408.8 L727.2,417.3" fill="none" stroke="#d9d7d3" stroke-width="0.7"/><path d="M733.6,368.3 L752.8,373.6" fill="none" stroke="#d9d7d3" stroke-width="0.7"/><path d="M601.4,369.4 L608.9,368.3" fill="none" stroke="#d9d7d3" stroke-width="0.7"/><path d="M617.4,384.3 L618.5,391.8" fill="none" stroke="#d9d7d3" stroke-width="0.7"/><path d="M623.8,376.8 L627.0,389.6" fill="none" stroke="#d9d7d3" stroke-width="0.7"/><path d="M686.0,424.6 L705.8,426.2 L702.7,435.3 L693.6,438.3" fill="none" stroke="#d9d7d3" stroke-width="0.7"/><path d="M705.8,426.2 L704.2,414.0 L711.9,407.9" fill="none" stroke="#d9d7d3" stroke-width="0.7"/><path d="M711.9,407.9 L724.0,414.0 L727.1,433.8 L716.4,436.8" fill="none" stroke="#d9d7d3" stroke-width="0.7"/><path d="M693.6,438.3 L705.8,444.4 L695.1,453.6" fill="none" stroke="#d9d7d3" stroke-width="0.7"/><path d="M708.8,449.0 L714.9,453.6 L716.4,470.3 L708.8,468.8" fill="none" stroke="#d9d7d3" stroke-width="0.7"/><path d="M682.9,455.1 L695.1,455.1 L705.8,465.8" fill="none" stroke="#d9d7d3" stroke-width="0.7"/><path d="M656.8,322.2 L664.3,341.7" fill="none" stroke="#d9d7d3" stroke-width="0.7"/><path d="M661.0,315.9 L664.3,341.7" fill="none" stroke="#d9d7d3" stroke-width="0.7"/><path d="M480.0,381.0 L495.0,381.5" fill="none" stroke="#d9d7d3" stroke-width="0.7"/><path d="M497.0,392.0 L505.0,387.0" fill="none" stroke="#d9d7d3" stroke-width="0.7"/><path d="M487.0,452.0 L503.0,455.0" fill="none" stroke="#d9d7d3" stroke-width="0.7"/><path d="M745.0,303.0 L760.0,300.0" fill="none" stroke="#d9d7d3" stroke-width="0.7"/><path d="M771.0,300.0 L782.0,303.0" fill="none" stroke="#d9d7d3" stroke-width="0.7"/><path d="M736.0,282.0 L731.5,272.4 L739.4,267.2 L745.0,268.0 L759.2,262.5 L757.9,260.6 L772.4,257.9 L788.3,259.9 L800.0,266.0 L813.3,273.1 L808.0,279.0 L804.1,284.3 L805.4,289.6 L785.6,289.6 L775.0,290.9 L753.9,284.3 L739.4,287.0" fill="none" stroke="#5f6b84" stroke-width="0.7"/><path d="M753.9,284.3 L750.0,292.2" fill="none" stroke="#5f6b84" stroke-width="0.7"/><path d="M775.0,290.9 L780.3,298.8" fill="none" stroke="#5f6b84" stroke-width="0.7"/><path d="M805.4,289.6 L796.2,302.8" fill="none" stroke="#5f6b84" stroke-width="0.7"/><path d="M814.9,272.3 L817.7,272.3" fill="none" stroke="#5f6b84" stroke-width="0.7"/><path d="M884.1,279.1 L886.1,262.9 L898.3,272.1 L910.5,276.1 L910.5,283.2 L913.5,289.8" fill="none" stroke="#5f6b84" stroke-width="0.7"/><path d="M796.2,302.8 L798.0,311.7 L804.0,309.2 L810.1,319.0 L813.8,323.8 L833.3,329.9 L841.8,343.3" fill="none" stroke="#5f6b84" stroke-width="0.7"/><path d="M854.0,328.7 L866.2,344.6 L877.1,343.3" fill="none" stroke="#5f6b84" stroke-width="0.7"/><path d="M735.4,293.6 L737.0,309.6 L743.0,322.5" fill="none" stroke="#5f6b84" stroke-width="0.7"/><path d="M772.4,320.0 L775.0,328.0 L776.0,335.5" fill="none" stroke="#5f6b84" stroke-width="0.7"/><path d="M789.6,308.0 L798.0,311.7" fill="none" stroke="#5f6b84" stroke-width="0.7"/><path d="M728.8,294.0 L731.9,304.4 L725.6,305.5" fill="none" stroke="#5f6b84" stroke-width="0.7"/><path d="M722.5,318.0 L742.0,324.5" fill="none" stroke="#5f6b84" stroke-width="0.7"/><path d="M762.0,334.8 L752.0,352.0 L759.2,359.6" fill="none" stroke="#5f6b84" stroke-width="0.7"/><path d="M631.7,287.7 L642.2,290.9" fill="none" stroke="#5f6b84" stroke-width="0.7"/><path d="M648.9,263.1 L650.5,280.4" fill="none" stroke="#5f6b84" stroke-width="0.7"/><path d="M665.1,259.0 L664.0,276.0" fill="none" stroke="#5f6b84" stroke-width="0.7"/><path d="M677.3,258.0 L680.0,266.0 L677.0,276.0" fill="none" stroke="#5f6b84" stroke-width="0.7"/><path d="M690.5,245.0 L695.0,258.0 L699.6,265.1" fill="none" stroke="#5f6b84" stroke-width="0.7"/><path d="M668.0,282.5 L694.3,276.3 L697.5,286.7" fill="none" stroke="#5f6b84" stroke-width="0.7"/><path d="M650.5,280.4 L664.0,276.0 L677.0,276.0 L694.3,276.3" fill="none" stroke="#5f6b84" stroke-width="0.7"/><path d="M679.3,252.0 L690.0,254.0" fill="none" stroke="#5f6b84" stroke-width="0.7"/><path d="M733.0,297.0 L731.9,294.0" fill="none" stroke="#5f6b84" stroke-width="0.7"/><path d="M642.1,267.7 L647.8,271.3 L652.0,276.2 L649.9,280.5 L651.3,286.2" fill="none" stroke="#5f6b84" stroke-width="0.7"/><path d="M644.2,263.5 L648.5,268.4 L647.8,271.3" fill="none" stroke="#5f6b84" stroke-width="0.7"/><path d="M649.2,260.6 L648.5,268.4" fill="none" stroke="#5f6b84" stroke-width="0.7"/><path d="M652.0,276.2 L662.0,277.0 L663.4,274.1" fill="none" stroke="#5f6b84" stroke-width="0.7"/><path d="M664.8,260.6 L665.5,268.4 L661.3,270.6 L663.4,274.1" fill="none" stroke="#5f6b84" stroke-width="0.7"/><path d="M649.9,280.5 L657.0,278.4 L662.7,276.2 L669.8,275.5 L671.2,274.1" fill="none" stroke="#5f6b84" stroke-width="0.7"/><path d="M651.3,286.2 L653.5,281.5 L657.0,280.5 L661.3,282.6" fill="none" stroke="#5f6b84" stroke-width="0.7"/><path d="M661.3,282.6 L662.7,279.8 L669.8,279.8" fill="none" stroke="#5f6b84" stroke-width="0.7"/><path d="M663.4,274.1 L671.2,274.1 L681.2,274.8" fill="none" stroke="#5f6b84" stroke-width="0.7"/><path d="M665.5,268.4 L672.6,270.0 L681.9,272.7" fill="none" stroke="#5f6b84" stroke-width="0.7"/><path d="M682.6,259.9 L683.3,267.0 L681.9,272.7" fill="none" stroke="#5f6b84" stroke-width="0.7"/><path d="M664.8,260.6 L682.6,259.9" fill="none" stroke="#5f6b84" stroke-width="0.7"/><path d="M669.8,279.8 L679.8,280.5 L681.2,274.8" fill="none" stroke="#5f6b84" stroke-width="0.7"/><path d="M682.6,259.9 L690.4,254.9" fill="none" stroke="#5f6b84" stroke-width="0.7"/><path d="M681.2,254.9 L690.4,254.9" fill="none" stroke="#5f6b84" stroke-width="0.7"/><path d="M680.2,250.5 L689.7,250.0" fill="none" stroke="#5f6b84" stroke-width="0.7"/><path d="M683.3,267.0 L699.7,265.6 L698.2,257.8 L690.4,254.9" fill="none" stroke="#5f6b84" stroke-width="0.7"/><path d="M681.9,272.7 L683.0,276.0 L691.1,275.5 L694.0,279.8" fill="none" stroke="#5f6b84" stroke-width="0.7"/><path d="M699.7,265.6 L703.2,264.9 L708.2,268.4 L717.4,272.7 L715.3,279.8 L710.3,281.9" fill="none" stroke="#5f6b84" stroke-width="0.7"/><path d="M679.8,281.2 L681.2,277.0 L691.1,275.5 L696.8,284.1" fill="none" stroke="#5f6b84" stroke-width="0.7"/><path d="M679.8,281.2 L684.0,286.2 L696.8,284.1" fill="none" stroke="#5f6b84" stroke-width="0.7"/><path d="M684.0,286.2 L684.0,293.3 L694.0,292.6" fill="none" stroke="#5f6b84" stroke-width="0.7"/><path d="M696.8,284.1 L695.4,286.9 L694.0,292.6" fill="none" stroke="#5f6b84" stroke-width="0.7"/><path d="M669.8,279.8 L676.2,281.9 L679.8,281.2" fill="none" stroke="#5f6b84" stroke-width="0.7"/><path d="M669.8,282.6 L675.5,289.8" fill="none" stroke="#5f6b84" stroke-width="0.7"/><path d="M676.2,281.9 L682.6,288.3 L679.8,294.0 L681.5,299.0" fill="none" stroke="#5f6b84" stroke-width="0.7"/><path d="M678.3,296.9 L684.0,293.3" fill="none" stroke="#5f6b84" stroke-width="0.7"/><path d="M690.4,244.3 L689.0,248.5 L690.4,254.9" fill="none" stroke="#5f6b84" stroke-width="0.7"/><path d="M632.1,288.3 L642.8,291.2" fill="none" stroke="#5f6b84" stroke-width="0.7"/><path d="M620.5,289.0 L619.5,305.5" fill="none" stroke="#5f6b84" stroke-width="0.7"/><path d="M722.0,288.0 L732.6,294.4" fill="none" stroke="#5f6b84" stroke-width="0.7"/><path d="M668.0,224.0 L667.0,236.0 L664.0,250.0" fill="none" stroke="#5f6b84" stroke-width="0.7"/><path d="M677.3,232.6 L679.0,226.0 L681.0,219.6" fill="none" stroke="#5f6b84" stroke-width="0.7"/></svg><!--/MAP-->
</div>

<!-- CONTINENT CARD -->
<div class="card" style="left:272px;top:676px;width:791px;height:330px;">
  <div class="t ttl" style="left:23px;top:31px;">Continent</div>
  <svg class="ico" style="left:20px;top:75px;color:#6cb872" width="18" height="18"><use href="#gear"/></svg><svg class="ico" style="left:64.7px;top:75px;color:#6cb872" width="18" height="18"><use href="#tbl"/></svg><svg class="ico" style="left:110.4px;top:75px;color:#6cb872" width="16" height="18"><use href="#exp"/></svg>
  <div class="thd" style="left:0;top:112px;width:791px;height:49px;"></div>
  <svg class="ico" style="left:719px;top:133.5px" width="9" height="6"><path d="M0,0 H9 L4.5,5.6Z" fill="#43a047"/></svg>
  <div class="t tht" style="left:23px;top:132.3px;">CONTINENT</div>
  <div class="t tht" style="right:23px;top:132.3px;">VISITS</div>
  <div class="row" style="left:0;top:203px;width:791px;"></div>
  <div class="row" style="left:0;top:246px;width:791px;"></div>
  <div class="row" style="left:0;top:289px;width:791px;"></div>
  <div class="t cell" style="left:23px;top:175.3px;">Europe</div>
  <div class="t num" style="right:23px;top:175.3px;">14,728</div>
  <div class="t cell" style="left:23px;top:218.5px;">North America</div>
  <div class="t num" style="right:23px;top:218.5px;">608</div>
  <div class="t cell" style="left:23px;top:261.1px;">Asia</div>
  <div class="t num" style="right:23px;top:261.1px;">571</div>
  <div class="t cell" style="left:23px;top:305.8px;">Oceania</div>
  <div class="t num" style="right:23px;top:305.8px;">121</div>
</div>

<!-- COUNTRY CARD -->
<div class="card" style="left:1090px;top:152px;width:791px;height:479px;">
  <div class="t ttl" style="left:23px;top:29.5px;">Country</div>
  <svg class="ico" style="left:20.3px;top:75px;color:#6cb872" width="18" height="18"><use href="#gear"/></svg><svg class="ico" style="left:65.0px;top:75px;color:#6cb872" width="18" height="18"><use href="#tbl"/></svg><svg class="ico" style="left:110.7px;top:75px;color:#6cb872" width="16" height="18"><use href="#exp"/></svg><svg class="ico" style="left:150.9px;top:74px;color:#6cb872" width="19" height="18"><use href="#srch"/></svg>
  <div class="thd" style="left:0;top:111px;width:791px;height:49.5px;"></div>
  <div class="t tht" style="left:23px;top:131px;">COUNTRY</div>
  <svg class="ico" style="left:719px;top:133px" width="9" height="6"><path d="M0,0 H9 L4.5,5.6Z" fill="#43a047"/></svg>
  <div class="t tht" style="right:23px;top:131px;">VISITS</div>
  <div class="row" style="left:0;top:203.5px;width:791px;"></div>
  <div class="row" style="left:0;top:246.5px;width:791px;"></div>
  <div class="row" style="left:0;top:289.5px;width:791px;"></div>
  <div class="row" style="left:0;top:332.5px;width:791px;"></div>
  <div class="row" style="left:0;top:375.5px;width:791px;"></div>
  <svg class="ico" style="left:24px;top:172.5px" width="26" height="19" viewBox="0 0 60 30" preserveAspectRatio="none"><rect width="60" height="30" fill="#012169"/><path d="M0,0 L60,30 M60,0 L0,30" stroke="#fff" stroke-width="6"/><path d="M0,0 L60,30 M60,0 L0,30" stroke="#c8102e" stroke-width="2.4"/><path d="M30,0 V30 M0,15 H60" stroke="#fff" stroke-width="10"/><path d="M30,0 V30 M0,15 H60" stroke="#c8102e" stroke-width="6"/><rect x="0.5" y="0.5" width="59" height="29" fill="none" stroke="#ccc" stroke-width="1.2"/></svg>
  <svg class="ico" style="left:24px;top:215.5px" width="26" height="19" viewBox="0 0 26 19"><rect width="26" height="19" fill="#fff"/><path d="M0 1.46H26M0 4.38H26M0 7.3H26M0 10.22H26M0 13.14H26M0 16.06H26M0 18.3H26" stroke="#c83a4a" stroke-width="1.46"/><rect width="11" height="10.2" fill="#3c3b6e"/><path d="M1.5 2H10M1.5 4.2H10M1.5 6.4H10M1.5 8.6H10" stroke="#8f8fb8" stroke-width="0.8" stroke-dasharray="0.8 1.1"/><rect x="0.5" y="0.5" width="25" height="18" fill="none" stroke="#ccc"/></svg>
  <svg class="ico" style="left:24px;top:258.5px" width="26" height="19" viewBox="0 0 26 19"><rect width="8.7" height="19" fill="#000"/><rect x="8.7" width="8.6" height="19" fill="#fdda24"/><rect x="17.3" width="8.7" height="19" fill="#ef3340"/><rect x="0.5" y="0.5" width="25" height="18" fill="none" stroke="#ccc"/></svg>
  <svg class="ico" style="left:24px;top:301.5px" width="26" height="19" viewBox="0 0 26 19"><rect width="26" height="19" fill="#ee1c25"/><path d="M5,2.2 L5.9,4.9 L8.6,4.9 L6.4,6.5 L7.2,9.1 L5,7.5 L2.8,9.1 L3.6,6.5 L1.4,4.9 L4.1,4.9Z" fill="#ffde00"/><circle cx="9.5" cy="2.3" r="0.7" fill="#ffde00"/><circle cx="10.8" cy="4.3" r="0.7" fill="#ffde00"/><circle cx="10.8" cy="6.6" r="0.7" fill="#ffde00"/><circle cx="9.5" cy="8.5" r="0.7" fill="#ffde00"/><rect x="0.5" y="0.5" width="25" height="18" fill="none" stroke="#ccc"/></svg>
  <svg class="ico" style="left:24px;top:344.5px" width="26" height="19" viewBox="0 0 26 19"><rect width="8.7" height="19" fill="#169b62"/><rect x="8.7" width="8.6" height="19" fill="#fff"/><rect x="17.3" width="8.7" height="19" fill="#ff883e"/><rect x="0.5" y="0.5" width="25" height="18" fill="none" stroke="#ccc"/></svg>
  <div class="t cell" style="left:64px;top:175.9px;">United Kingdom</div>
  <div class="t num" style="right:23px;top:175.9px;">12,853</div>
  <div class="t cell" style="left:64px;top:218.9px;">United States</div>
  <div class="t num" style="right:23px;top:218.9px;">463</div>
  <div class="t cell" style="left:64px;top:261.9px;">Belgium</div>
  <div class="t num" style="right:23px;top:261.9px;">442</div>
  <div class="t cell" style="left:64px;top:304.9px;">China</div>
  <div class="t num" style="right:23px;top:304.9px;">293</div>
  <div class="t cell" style="left:64px;top:347.9px;">Ireland</div>
  <div class="t num" style="right:23px;top:347.9px;">272</div>
  <div class="t" style="left:377px;top:393.5px;font-size:14.8px;letter-spacing:-0.3px;">1–5 of 111</div>
  <div class="t" style="left:464px;top:393.5px;font-size:14.3px;color:#1e72d0;text-decoration:underline;">Next ›</div>
  <svg class="ico" style="left:19.7px;top:426px;color:#6cb872" width="18" height="18"><use href="#gear"/></svg><svg class="ico" style="left:64.4px;top:426px;color:#6cb872" width="18" height="18"><use href="#tbl"/></svg><svg class="ico" style="left:110.10000000000001px;top:426px;color:#6cb872" width="16" height="18"><use href="#exp"/></svg><svg class="ico" style="left:150.29999999999998px;top:425px;color:#6cb872" width="19" height="18"><use href="#srch"/></svg>
  <div class="t" style="left:745px;top:428px;font-size:19px;color:#6cb872;">5</div>
  <svg class="ico" style="left:763px;top:434px" width="12" height="7"><path d="M0.5,0.5 H11.5 L6,6.5Z" fill="#6cb872"/></svg>
</div>

<!-- REGION CARD -->
<div class="card" style="left:1090px;top:649px;width:791px;height:360px;">
  <div class="t ttl" style="left:23px;top:30px;">Region</div>
  <svg class="ico" style="left:19.7px;top:76px;color:#6cb872" width="18" height="18"><use href="#gear"/></svg><svg class="ico" style="left:64.4px;top:76px;color:#6cb872" width="18" height="18"><use href="#tbl"/></svg><svg class="ico" style="left:110.10000000000001px;top:76px;color:#6cb872" width="16" height="18"><use href="#exp"/></svg><svg class="ico" style="left:150.29999999999998px;top:75px;color:#6cb872" width="19" height="18"><use href="#srch"/></svg>
  <div class="thd" style="left:0;top:112.4px;width:791px;height:48px;"></div>
  <div class="t tht" style="left:23px;top:131.5px;">REGION</div>
  <svg class="ico" style="left:719px;top:133.5px" width="9" height="6"><path d="M0,0 H9 L4.5,5.6Z" fill="#43a047"/></svg>
  <div class="t tht" style="right:23px;top:131.5px;">VISITS</div>
  <div class="row" style="left:0;top:203.2px;width:791px;"></div>
  <div class="row" style="left:0;top:246.4px;width:791px;"></div>
  <div class="row" style="left:0;top:289.2px;width:791px;"></div>
  <div class="row" style="left:0;top:332px;width:791px;"></div>
  <svg class="ico" style="left:24px;top:172px" width="26" height="19" viewBox="0 0 60 30" preserveAspectRatio="none"><rect width="60" height="30" fill="#012169"/><path d="M0,0 L60,30 M60,0 L0,30" stroke="#fff" stroke-width="6"/><path d="M0,0 L60,30 M60,0 L0,30" stroke="#c8102e" stroke-width="2.4"/><path d="M30,0 V30 M0,15 H60" stroke="#fff" stroke-width="10"/><path d="M30,0 V30 M0,15 H60" stroke="#c8102e" stroke-width="6"/><rect x="0.5" y="0.5" width="59" height="29" fill="none" stroke="#ccc" stroke-width="1.2"/></svg>
  <div class="ico" style="left:24px;top:215.5px;width:24px;height:18px;border:1px solid #ccc;background:#fff;font:bold 12px/18px 'Liberation Sans',sans-serif;text-align:center;color:#111;">?</div>
  <svg class="ico" style="left:24px;top:258.5px" width="26" height="19" viewBox="0 0 60 30" preserveAspectRatio="none"><rect width="60" height="30" fill="#012169"/><path d="M0,0 L60,30 M60,0 L0,30" stroke="#fff" stroke-width="6"/><path d="M0,0 L60,30 M60,0 L0,30" stroke="#c8102e" stroke-width="2.4"/><path d="M30,0 V30 M0,15 H60" stroke="#fff" stroke-width="10"/><path d="M30,0 V30 M0,15 H60" stroke="#c8102e" stroke-width="6"/><rect x="0.5" y="0.5" width="59" height="29" fill="none" stroke="#ccc" stroke-width="1.2"/></svg>
  <svg class="ico" style="left:24px;top:301.5px" width="26" height="19" viewBox="0 0 26 19"><rect width="8.7" height="19" fill="#000"/><rect x="8.7" width="8.6" height="19" fill="#fdda24"/><rect x="17.3" width="8.7" height="19" fill="#ef3340"/><rect x="0.5" y="0.5" width="25" height="18" fill="none" stroke="#ccc"/></svg>
  <div class="t cell" style="left:64px;top:175.3px;">England, United Kingdom</div>
  <div class="t num" style="right:23px;top:175.3px;">11,707</div>
  <div class="t cell" style="left:64px;top:219.3px;">Unknown</div>
  <div class="t num" style="right:23px;top:219.3px;">753</div>
  <div class="t cell" style="left:64px;top:262.8px;">Scotland, United Kingdom</div>
  <div class="t num" style="right:23px;top:262.8px;">524</div>
  <div class="t cell" style="left:64px;top:306.3px;">Vlaams Gewest, Belgium</div>
  <div class="t num" style="right:23px;top:306.3px;">406</div>
</div>

</body></html>
